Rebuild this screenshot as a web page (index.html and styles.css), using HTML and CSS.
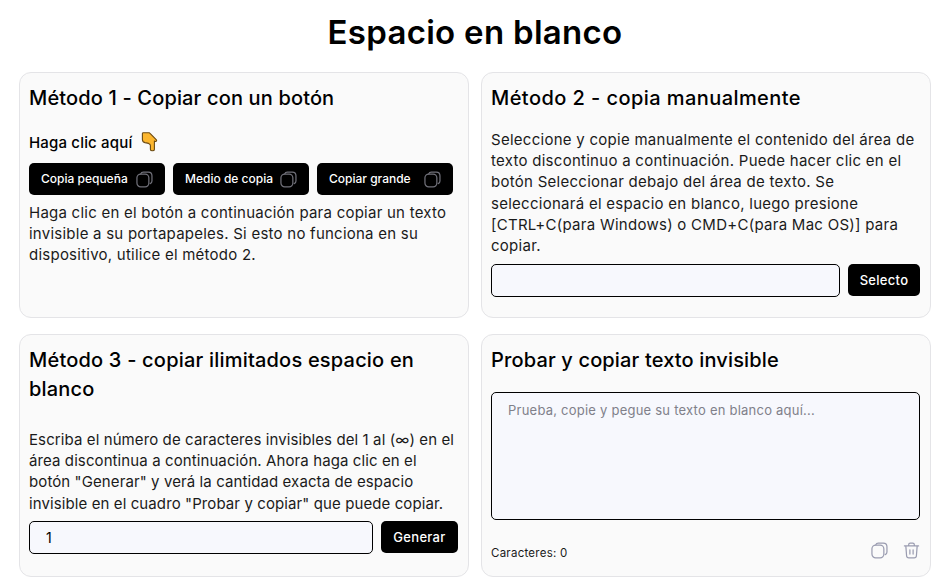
FILE: index.html
```html
<!DOCTYPE html>
<html lang="en">
<head>
    <meta charset="UTF-8">
    <meta name="viewport" content="width=device-width, initial-scale=1.0">
    <title>Espacio en blanco</title>
    <link rel="stylesheet" href="styles.css">
</head>
<body>
    <svg class="defs" width="0" height="0">
        <symbol id="copy" viewBox="0 0 18 18">
            <rect x="1" y="3.2" width="12.6" height="13.6" rx="4" fill="none" stroke="currentColor" stroke-width="1.3"/>
            <path d="M5 3.1C5.4 1.8 6.4 1.1 7.8 1.1H13C15.4 1.1 16.9 2.6 16.9 5V10.6C16.9 12 16.2 13 15 13.4" fill="none" stroke="currentColor" stroke-width="1.3" stroke-linecap="round"/>
        </symbol>
    </svg>

    <h1>Espacio en blanco</h1>

    <div class="grid">
        <div class="card">
            <h2>Método 1 - Copiar con un botón</h2>
            <div class="click-here">
                <span>Haga clic aquí</span>
                <svg class="hand" width="17" height="20" viewBox="0 0 17 20">
                    <path d="M1.4 1.6C1.4 1 1.9.8 2.4.8H8.4L9.8 2.2 15.4 7.8C16 8.6 15.4 9.6 14.4 9.4L13.4 9V17.4C13.4 19.2 9.4 19.2 9.4 17.4V13.6C9.4 12.6 8.6 11.8 7.6 11.4L4 10.6C2.4 10.2 1.4 9 1.4 7.4Z" fill="#fcb62e" stroke="#6b4a12" stroke-width="1.1" stroke-linejoin="round"/>
                </svg>
            </div>
            <div class="copy-buttons">
                <button class="btn-small">Copia pequeña <svg class="icon"><use href="#copy"/></svg></button>
                <button class="btn-small">Medio de copia <svg class="icon"><use href="#copy"/></svg></button>
                <button class="btn-small">Copiar grande <svg class="icon"><use href="#copy"/></svg></button>
            </div>
            <p>Haga clic en el botón a continuación para copiar un texto<br>invisible a su portapapeles. Si esto no funciona en su<br>dispositivo, utilice el método 2.</p>
        </div>

        <div class="card">
            <h2 class="title-wide">Método 2 - copia manualmente</h2>
            <p class="intro">Seleccione y copie manualmente el contenido del área de<br>texto discontinuo a continuación. Puede hacer clic en el<br>botón Seleccionar debajo del área de texto. Se<br>seleccionará el espacio en blanco, luego presione<br>[CTRL+C(para Windows) o CMD+C(para Mac OS)] para<br>copiar.</p>
            <div class="input-row">
                <input type="text">
                <button class="btn btn-select">Selecto</button>
            </div>
        </div>

        <div class="card">
            <h2 class="title-long">Método 3 - copiar ilimitados espacio en blanco</h2>
            <p class="intro intro-tight">Escriba el número de caracteres invisibles del 1 al (∞) en el<br>área discontinua a continuación. Ahora haga clic en el<br>botón "Generar" y verá la cantidad exacta de espacio<br>invisible en el cuadro "Probar y copiar" que puede copiar.</p>
            <div class="input-row">
                <input type="text" value="1">
                <button class="btn btn-generate">Generar</button>
            </div>
        </div>

        <div class="card">
            <h2 class="title-test">Probar y copiar texto invisible</h2>
            <textarea placeholder="Prueba, copie y pegue su texto en blanco aquí..."></textarea>
            <div class="test-footer">
                <span class="char-count">Caracteres: 0</span>
                <div class="tools">
                    <svg class="icon"><use href="#copy"/></svg>
                    <svg class="icon" viewBox="0 0 18 18">
                        <path d="M1.5 4.2H16.5M6 4V2.8C6 1.8 6.7 1.1 7.7 1.1H10.3C11.3 1.1 12 1.8 12 2.8V4M3 4.4 3.8 14.6C3.9 16 4.9 16.9 6.2 16.9H11.8C13.1 16.9 14.1 16 14.2 14.6L15 4.4M7.3 8.2V12.8M10.7 8.2V12.8" fill="none" stroke="currentColor" stroke-width="1.3" stroke-linecap="round"/>
                    </svg>
                </div>
            </div>
        </div>
    </div>
</body>
</html>
```

FILE: styles.css
```css
* {
    box-sizing: border-box;
}

body {
    font-family: Inter, "Liberation Sans", sans-serif;
    margin: 0;
    padding: 0 21px 0 19px;
    background-color: #fff;
    color: #1a1a1a;
}

.defs {
    display: block;
    height: 0;
}

h1 {
    font-size: 33px;
    font-weight: 600;
    line-height: 48px;
    letter-spacing: 0.3px;
    color: #000;
    text-align: center;
    margin: 0;
    padding: 8px 0 16px;
}

.grid {
    display: grid;
    grid-template-columns: 1fr 1fr;
    grid-template-rows: 246px 243px;
    gap: 16px 12px;
}

.card {
    background: #fafafa;
    border: 1px solid #e4e4e7;
    border-radius: 12px;
    padding: 11px 10px 10px 9px;
}

h2 {
    font-size: 20px;
    font-weight: 500;
    line-height: 29px;
    letter-spacing: 0.15px;
    color: #000;
    margin: 0 0 16px;
}

.title-wide {
    letter-spacing: 0.43px;
}

.title-long {
    letter-spacing: 0.2px;
    margin-bottom: 25px;
}

.title-test {
    margin-bottom: 17px;
}

p {
    font-size: 15px;
    line-height: 21.2px;
    letter-spacing: 0.24px;
    margin: 0;
}

.intro {
    letter-spacing: 0.27px;
    margin-bottom: 7.3px;
}

.intro-tight {
    letter-spacing: 0.1px;
}

.click-here {
    display: flex;
    align-items: center;
    gap: 9px;
    font-size: 15px;
    font-weight: 500;
    letter-spacing: 0.17px;
    color: #000;
    height: 24px;
    padding-top: 2px;
    margin-bottom: 10px;
}

.copy-buttons {
    display: flex;
    gap: 8px;
    margin-bottom: 7px;
}

.btn-small {
    display: flex;
    align-items: center;
    justify-content: space-between;
    width: 136px;
    height: 32px;
    padding: 0 12px 2px;
    background: #000;
    color: #fff;
    border: none;
    border-radius: 5px;
    font-family: inherit;
    font-size: 12px;
    font-weight: 500;
}

.btn-small .icon {
    margin-top: 2px;
}

.icon {
    width: 17px;
    height: 17px;
    color: #71717a;
}

.test-footer .icon {
    color: #9a9cb0;
}

.input-row {
    display: flex;
    gap: 8px;
}

input {
    flex: 1;
    min-width: 0;
    height: 33px;
    padding: 0 16px;
    background: #f7f8fd;
    border: 1px solid #000;
    border-radius: 5px;
    font-family: inherit;
    font-size: 14px;
    color: #000;
}

.btn {
    flex: none;
    height: 32px;
    padding: 0;
    background: #000;
    color: #fff;
    border: none;
    border-radius: 5px;
    font-family: inherit;
    font-size: 13px;
    font-weight: 500;
    letter-spacing: 0.3px;
}

.btn-select {
    width: 72px;
}

.btn-generate {
    width: 77px;
}

textarea {
    display: block;
    width: 100%;
    height: 128px;
    padding: 9px 16px;
    background: #f7f8fd;
    border: 1px solid #000;
    border-radius: 5px;
    font-family: inherit;
    font-size: 13px;
    resize: none;
}

textarea::placeholder {
    color: #80808a;
    letter-spacing: 0.23px;
}

.test-footer {
    display: flex;
    justify-content: space-between;
    align-items: flex-start;
    font-size: 11.5px;
    letter-spacing: 0.25px;
    margin-top: 22px;
}

.char-count {
    padding-top: 4px;
}

.tools {
    display: flex;
    gap: 15px;
}
```
